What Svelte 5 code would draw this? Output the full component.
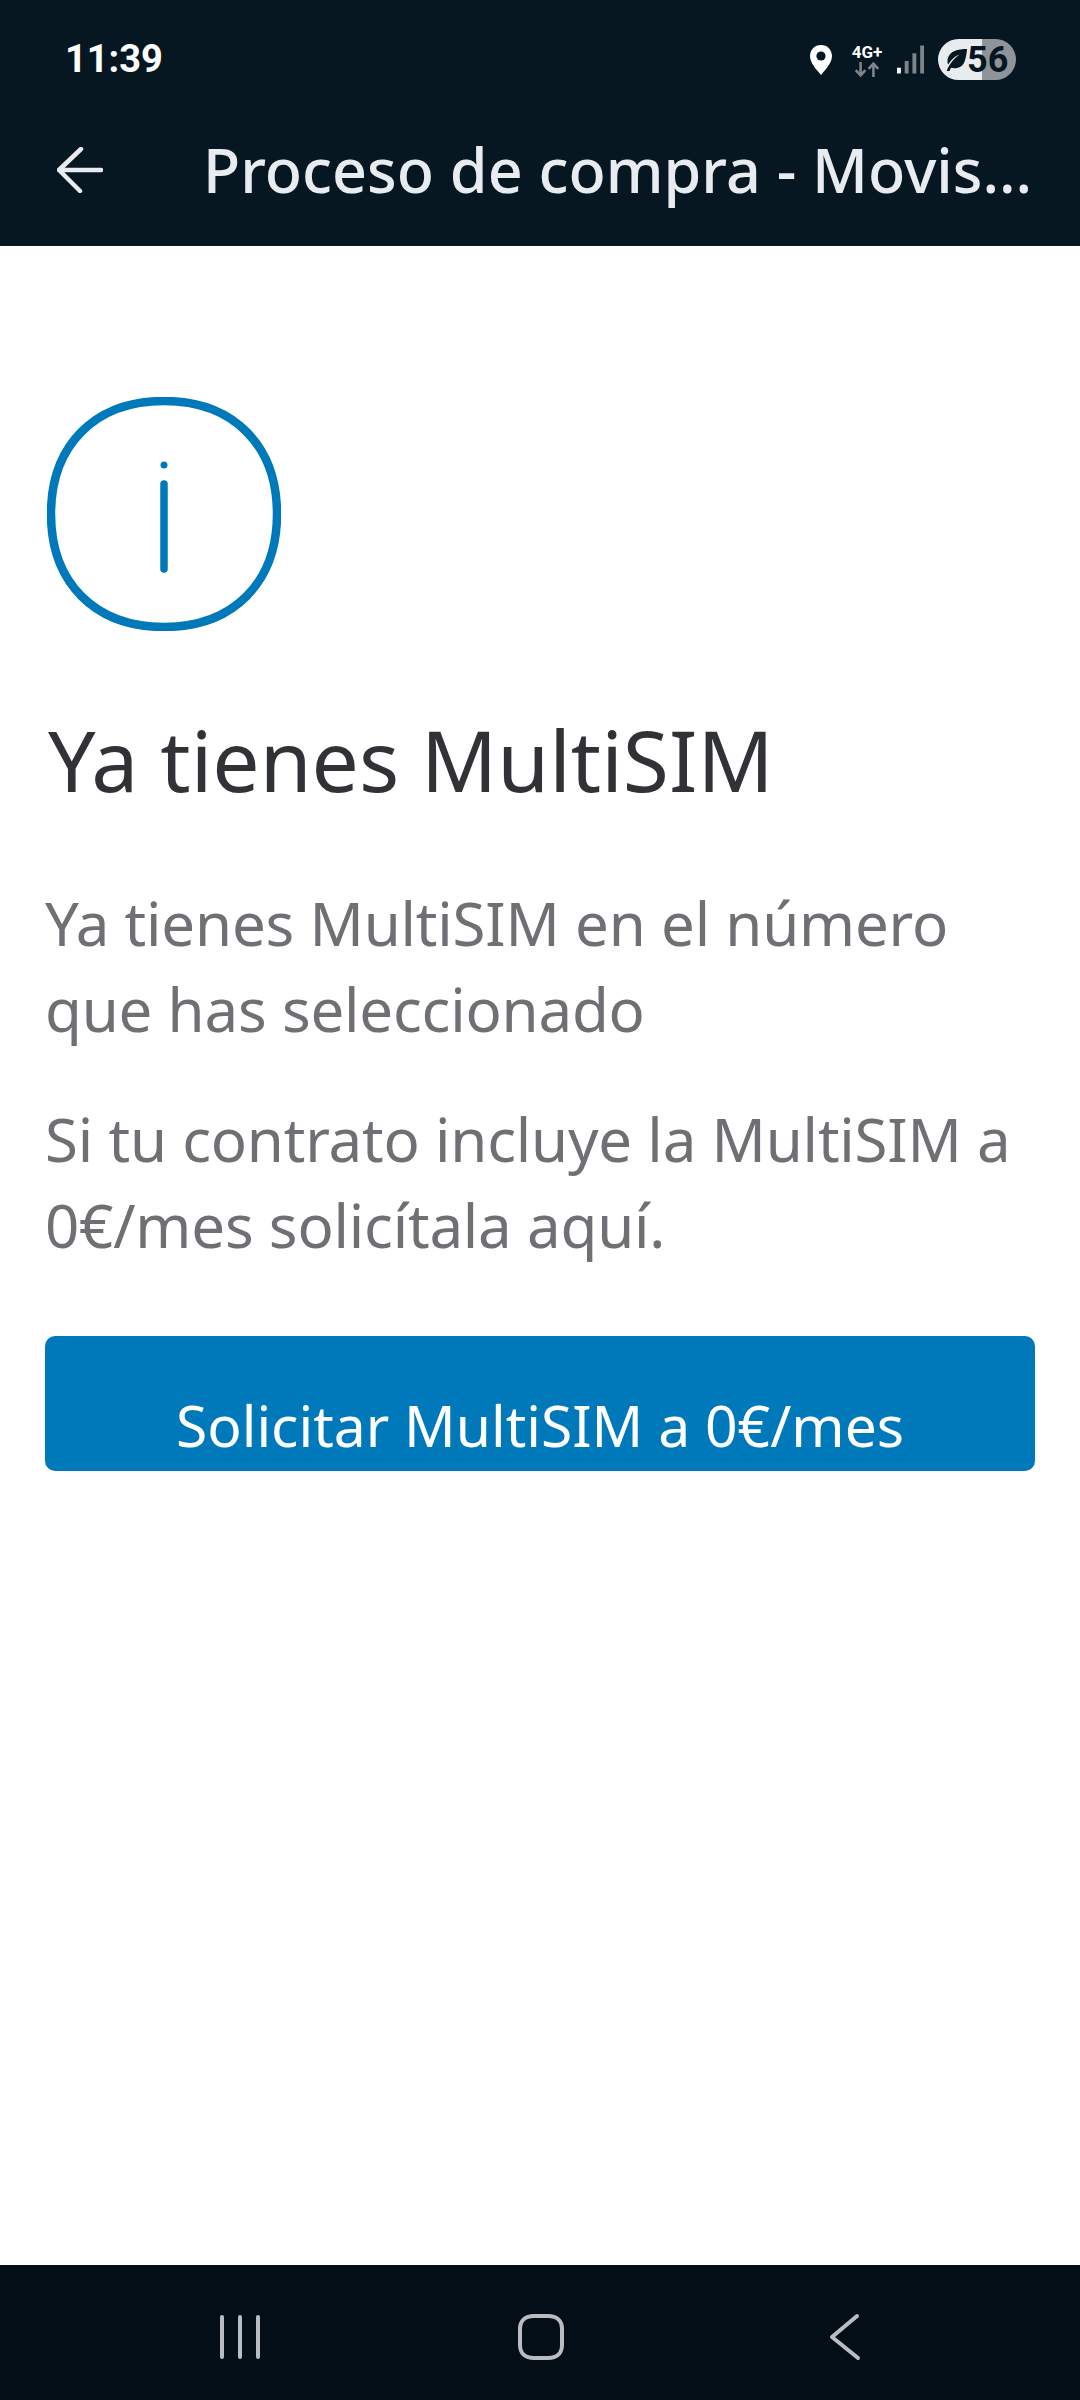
<script lang="ts">
	const paragraphs = [
		'Ya tienes MultiSIM en el número que has seleccionado',
		'Si tu contrato incluye la MultiSIM a 0€/mes solicítala aquí.'
	];
</script>

<div class="screen">
	<header class="top">
		<div class="status">
			<span class="time">11:39</span>
			<div class="status-right">
				<svg class="pin" width="24" height="32" viewBox="0 0 24 32">
					<path d="M12 1C5.600 1 1 5.800 1 12c0 6.600 5.600 12.600 11 19 5.400-6.400 11-12.400 11-19C23 5.800 18.400 1 12 1z" fill="#fff" />
					<circle cx="12" cy="12" r="4.600" fill="#071722" />
				</svg>
				<div class="network">
					<span class="net-label">4G+</span>
					<svg width="28" height="15" viewBox="0 0 24 14" fill="none" stroke="#7d858a" stroke-width="2.400">
						<path d="M6 0v12M1.500 7.500 6 12.500l4.500-5" />
						<path d="M18 14V2M13.500 6.500 18 1.500l4.500 5" />
					</svg>
				</div>
				<svg class="signal" width="28" height="30" viewBox="0 0 29 30">
					<rect x="0" y="23" width="4" height="6" fill="#fff" />
					<rect x="8" y="16" width="4" height="13" fill="#7d858a" />
					<rect x="16" y="8" width="4" height="21" fill="#7d858a" />
					<rect x="24" y="0" width="4" height="29" fill="#7d858a" />
				</svg>
				<div class="battery">
					<svg width="24" height="24" viewBox="0 0 26 26">
						<path d="M25 1C15 1 6 3 4 12c-.5 2.500-.3 4.500.6 6C8 12 12 9 17 7c-5 3.500-9 7.500-13 15l-1 3h3l1.500-3.500c7 1.500 13-1 15-7.500C24 10 24.500 5 25 1z" fill="#071722" />
					</svg>
					<span class="level">56</span>
				</div>
			</div>
		</div>
		<div class="toolbar">
			<svg class="back" width="46" height="46" viewBox="0 0 46 46" fill="none" stroke="#e8ebf0" stroke-width="4.500" stroke-linecap="round" stroke-linejoin="round">
				<path d="M2 23h42M24 2 2 23l21 21" />
			</svg>
			<h1 class="title">Proceso de compra - Movis...</h1>
		</div>
	</header>

	<main class="content">
		<svg class="info" width="234" height="234" viewBox="0 0 234 234" fill="none" stroke="#0079bb" stroke-linecap="round">
			<path stroke-width="8.500" d="M117 4C186 4 230 48 230 117C230 186 186 230 117 230C48 230 4 186 4 117C4 48 48 4 117 4Z" />
			<path stroke-width="7.500" d="M117 87V172" />
			<circle cx="117" cy="68" r="3.500" fill="#0079bb" stroke="none" />
		</svg>
		<h2 class="heading">Ya tienes MultiSIM</h2>
		{#each paragraphs as text}
			<p class="para">{text}</p>
		{/each}
		<button class="cta">Solicitar MultiSIM a 0€/mes</button>
	</main>

	<nav class="navbar">
		<svg width="42" height="46" viewBox="0 0 42 46" stroke="#b9bcc0" stroke-width="4" stroke-linecap="round">
			<path d="M3 3v40M21 3v40M39 3v40" />
		</svg>
		<svg class="home" width="48" height="48" viewBox="0 0 48 48" fill="none" stroke="#b9bcc0" stroke-width="4">
			<path d="M17 3h14c9 0 14 5 14 13v16c0 8-5 13-14 13H17C8 45 3 40 3 32V16C3 8 8 3 17 3z" />
		</svg>
		<svg width="32" height="48" viewBox="0 0 32 48" fill="none" stroke="#b9bcc0" stroke-width="4" stroke-linecap="round" stroke-linejoin="round">
			<path d="M28 3 3 24l26 21" />
		</svg>
	</nav>
</div>

<style>
	:global(body) {
		margin: 0;
		background: #fff;
	}

	.screen {
		width: 1080px;
		height: 2400px;
		display: flex;
		flex-direction: column;
		font-family: 'Noto Sans', 'Open Sans', sans-serif;
	}

	.top {
		background: #071722;
		height: 246px;
		flex-shrink: 0;
	}

	.status {
		padding: 39px 64px 0 65px;
		box-sizing: border-box;
		height: 117px;
		display: flex;
		justify-content: space-between;
		align-items: flex-start;
	}

	.time {
		font-family: Roboto, sans-serif;
		font-weight: 700;
		font-size: 38px;
		line-height: 40px;
		color: #fff;
	}

	.status-right {
		display: flex;
		align-items: center;
		gap: 13px;
	}

	.pin {
		margin-right: 4px;
	}

	.network {
		display: flex;
		flex-direction: column;
		align-items: center;
		gap: 2px;
		width: 34px;
		margin-top: 2px;
	}

	.net-label {
		font-family: Roboto, sans-serif;
		font-weight: 700;
		font-size: 17px;
		line-height: 16px;
		color: #fff;
		white-space: nowrap;
	}

	.battery {
		width: 78px;
		height: 41px;
		border-radius: 21px;
		background: linear-gradient(90deg, #e8ecee 0 44px, #8e9497 44px);
		display: flex;
		align-items: center;
		padding-left: 6px;
		box-sizing: border-box;
	}

	.level {
		font-family: Roboto, sans-serif;
		font-weight: 700;
		font-size: 36px;
		color: #071722;
		line-height: 40px;
		margin-left: -1px;
	}

	.toolbar {
		display: flex;
		align-items: center;
		height: 106px;
		padding-left: 57px;
	}

	.back {
		flex-shrink: 0;
	}

	.title {
		margin: 0 0 0 100px;
		font-size: 61px;
		line-height: 70px;
		font-weight: 500;
		color: #e8ebf0;
		white-space: nowrap;
	}

	.content {
		flex: 1;
		padding: 151px 45px 0;
		color: #6e7074;
	}

	.info {
		display: block;
		margin-left: 2px;
	}

	.heading {
		margin: 74px 0 0 3px;
		font-size: 84px;
		line-height: 110px;
		font-weight: 400;
		color: #313235;
	}

	.para {
		margin: 65px 0 0;
		font-size: 60px;
		line-height: 86px;
		letter-spacing: -0.2px;
	}

	.para + .para {
		margin-top: 44px;
	}

	.cta {
		display: block;
		width: 990px;
		height: 135px;
		margin-top: 68px;
		padding: 42px 0 0;
		border: none;
		border-radius: 10px;
		background: #0079bb;
		color: #fff;
		font: inherit;
		font-size: 57px;
		line-height: 80px;
	}

	.navbar {
		height: 135px;
		flex-shrink: 0;
		background: #040e16;
		display: flex;
		align-items: center;
		justify-content: space-between;
		padding: 9px 219px 0;
		box-sizing: border-box;
	}

	.home {
		margin-right: 8px;
	}
</style>
